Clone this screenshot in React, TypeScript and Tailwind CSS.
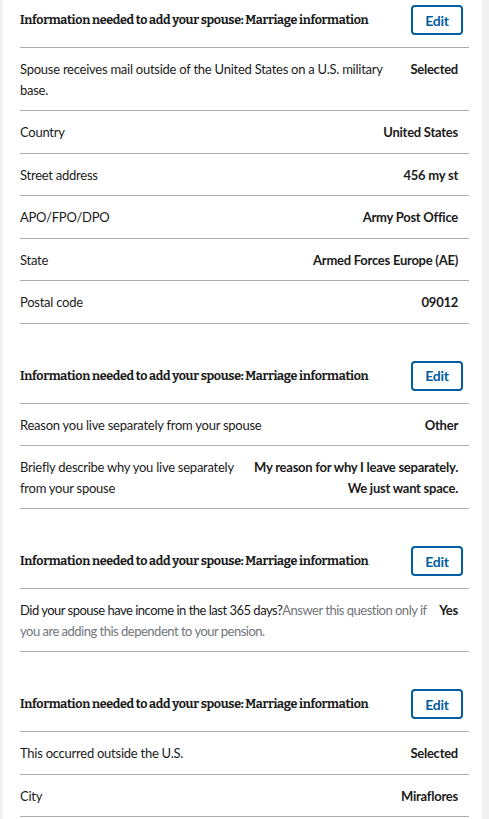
import React from "react";

type Row = { label: string; hint?: string; value: string; tight?: boolean };

const sections: Row[][] = [
	[
		{ label: "Spouse receives mail outside of the United States on a U.S. military base.", value: "Selected" },
		{ label: "Country", value: "United States" },
		{ label: "Street address", value: "456 my st" },
		{ label: "APO/FPO/DPO", value: "Army Post Office" },
		{ label: "State", value: "Armed Forces Europe (AE)" },
		{ label: "Postal code", value: "09012" },
	],
	[
		{ label: "Reason you live separately from your spouse", value: "Other" },
		{
			label: "Briefly describe why you live separately from your spouse",
			value: "My reason for why I leave separately. We just want space.",
		},
	],
	[
		{
			label: "Did your spouse have income in the last 365 days?",
			hint: "Answer this question only if you are adding this dependent to your pension.",
			value: "Yes",
			tight: true,
		},
	],
	[
		{ label: "This occurred outside the U.S.", value: "Selected" },
		{ label: "City", value: "Miraflores" },
		{ label: "Country", value: "Peru" },
	],
];

const body = { fontFamily: '"Source Sans Pro", Lato, "Liberation Sans", sans-serif' };
const heading = { fontFamily: 'Bitter, "Liberation Serif", serif' };

function ReviewSection({ rows, first }: { rows: Row[]; first?: boolean }) {
	return (
		<div className={first ? "" : "mt-8"}>
			{/* 제목 + 수정 버튼 */}
			<div className="flex items-center justify-between pt-[5px] pb-[12px] border-b border-[#a9aeb1]">
				<h4
					style={heading}
					className="text-[12.5px] tracking-[-0.3px] font-bold text-[#1b1b1b] leading-5 whitespace-nowrap"
				>
					Information needed to add your spouse: Marriage information
				</h4>
				<button
					style={body}
					className="h-[30px] w-[52px] mr-[6px] border-2 border-[#005ea2] rounded-[4px] text-[#005ea2] text-[14px] font-bold bg-white tracking-[-0.3px]"
				>
					Edit
				</button>
			</div>
			<dl>
				{rows.map((r, i) => (
					<div
						key={i}
						className="flex justify-between gap-2 pt-[11px] pb-[10px] pr-[11px] border-b border-[#a9aeb1] text-[13px] tracking-[-0.25px] leading-[20.5px]"
					>
						<dt className={r.tight ? "flex-1 basis-0 text-[#1b1b1b] tracking-[-0.5px]" : "flex-1 basis-0 text-[#1b1b1b]"}>
							{r.label}
							{r.hint && <span className="text-[#71767a]">{r.hint}</span>}
						</dt>
						<dd className="flex-none max-w-[48%] text-right font-bold text-[#1b1b1b]">{r.value}</dd>
					</div>
				))}
			</dl>
		</div>
	);
}

export default function App() {
	return (
		<div style={body} className="min-h-screen bg-[#f1f1f1] pl-[3px] pr-[7px]">
			<div className="bg-white min-h-screen pl-[17px] pr-[13px]">
				{sections.map((rows, i) => (
					<ReviewSection key={i} rows={rows} first={i === 0} />
				))}
			</div>
		</div>
	);
}
